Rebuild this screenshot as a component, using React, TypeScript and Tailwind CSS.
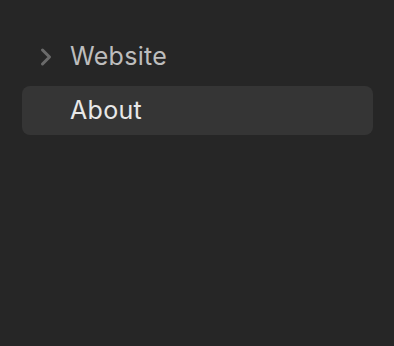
import { ChevronRight } from "lucide-react";

export default function App() {
  return (
    <div className="w-[394px] h-[346px] bg-[#262626] pt-[32px] pl-[22px] pr-[21px] font-['Inter',sans-serif]">
      <div className="flex flex-col gap-[5px]">
        <div className="h-[49px] flex items-center rounded-lg">
          <div className="w-[48px] flex justify-center">
            <ChevronRight className="w-[28px] h-[28px] text-[#6a6a6a]" strokeWidth={2.6} />
          </div>
          <span className="text-[25px] text-[#bdbdbd] tracking-[0.3px]">Website</span>
        </div>
        <div className="h-[49px] flex items-center rounded-lg bg-[#353535]">
          <div className="w-[48px]" />
          <span className="text-[25px] text-[#e8e8e8] tracking-[0.3px]">About</span>
        </div>
      </div>
    </div>
  );
}
